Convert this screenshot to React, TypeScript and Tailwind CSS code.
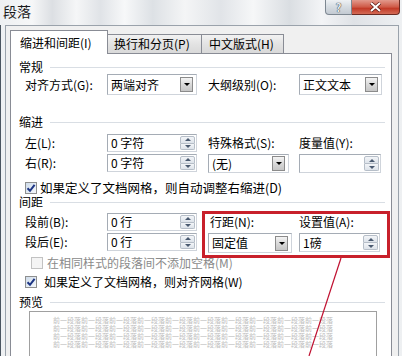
import React from 'react';

const Tri = ({ up = false, color = 'border-t-black' }: { up?: boolean; color?: string }) =>
  up ? (
    <div className="w-0 h-0 border-l-[3px] border-r-[3px] border-b-[3px] border-l-transparent border-r-transparent border-b-[#4a5a70]" />
  ) : (
    <div className={`w-0 h-0 border-l-[3px] border-r-[3px] border-t-[3px] border-l-transparent border-r-transparent ${color}`} />
  );

function DropBtn() {
  return (
    <div className="w-[13px] h-[15px] border border-[#8b8b8b] bg-[linear-gradient(#f4f4f4,#d9d9d9_50%,#c6c6c6)] flex items-center justify-center">
      <Tri />
    </div>
  );
}

function Select({ text, className }: { text: string; className: string }) {
  return (
    <div className={`flex items-center justify-between bg-white border border-[#a5acb5] border-r-[#cfd4db] border-b-[#cfd4db] pl-[3px] pr-[3px] ${className}`}>
      <span className="text-[12px] leading-none text-black">{text}</span>
      <DropBtn />
    </div>
  );
}

function Spin({ text, className }: { text: string; className: string }) {
  return (
    <div className={`flex items-stretch justify-between bg-white border border-[#a5acb5] border-r-[#cfd4db] border-b-[#cfd4db] pl-[3px] ${className}`}>
      <span className="self-center text-[12px] leading-none text-black">{text}</span>
      <div className="flex flex-col w-[15px] my-px mr-px">
        <div className="flex-1 flex items-center justify-center bg-[linear-gradient(#f3f5f8,#dde3ea)] border border-[#b6bec8] rounded-t-[2px]">
          <Tri up />
        </div>
        <div className="flex-1 flex items-center justify-center bg-[linear-gradient(#f3f5f8,#dde3ea)] border border-t-0 border-[#b6bec8] rounded-b-[2px]">
          <Tri color="border-t-[#4a5a70]" />
        </div>
      </div>
    </div>
  );
}

function Check({ checked, disabled }: { checked?: boolean; disabled?: boolean }) {
  return (
    <div
      className={`w-[12px] h-[12px] border flex items-center justify-center ${
        disabled ? 'border-[#c2c2c2] bg-[#f4f4f4]' : 'border-[#8e8f8f] bg-[linear-gradient(135deg,#cfdcea,#f4f7fb)]'
      }`}
    >
      {checked && (
        <svg width="10" height="10" viewBox="0 0 10 10">
          <path d="M1.5 5.2 L4 7.8 L8.6 1.8" fill="none" stroke="#1d3584" strokeWidth="2" />
        </svg>
      )}
    </div>
  );
}

function Heading({ text }: { text: string }) {
  return (
    <div className="flex items-center h-[14px]">
      <span className="text-[12px] leading-none text-black">{text}</span>
      <div className="ml-[7px] flex-1 h-px bg-[#d9dee4]" />
    </div>
  );
}

function Label({ text, className = '' }: { text: string; className?: string }) {
  return <span className={`text-[12px] leading-none text-black whitespace-nowrap ${className}`}>{text}</span>;
}

const previewLine = '前一段落前一段落前一段落前一段落前一段落前一段落前一段落前一段落前一段落前一段落';

export default function App() {
  return (
    <div className="relative w-[402px] h-[356px] overflow-hidden font-['Noto_Sans_CJK_SC','Noto_Sans',sans-serif] bg-[linear-gradient(90deg,#eef0f2_0%,#f6f7f8_8%,#dcdfe3_13%,#f5f6f7_19%,#e0e3e7_25%,#f7f8f9_31%,#dde1e5_38%,#f4f5f6_46%,#e1e4e8_55%,#f6f7f8_63%,#dadee2_72%,#f3f4f6_80%,#dfe2e6_88%,#eef0f2_100%)]">
      {/* Title bar */}
      <div className="h-[25px] flex items-center pl-[3px] pb-[3px]">
        <span className="text-[14px] leading-none text-[#1a1a1a]">段落</span>
      </div>
      <div className="absolute top-0 left-[325px] flex">
        <div className="w-[27px] h-[15px] border border-t-0 border-[#7d8791] rounded-bl-[4px] bg-[linear-gradient(#eef1f4,#d5dbe1_50%,#c3cad2)] flex items-center justify-center">
          <span className="text-[11px] leading-[11px] font-bold text-[#e9edf1] [text-shadow:0_0_1px_#333,0_0_1px_#333]">?</span>
        </div>
        <div className="w-[48px] h-[15px] border border-t-0 border-l-0 border-[#6b2a22] rounded-br-[4px] bg-[linear-gradient(#e29a8d,#cf5a47_50%,#c23b28_60%,#d36a55)] flex items-center justify-center">
          <svg width="13" height="10" viewBox="0 0 13 10">
            <path d="M2 1 L11 9 M11 1 L2 9" stroke="#5a1a14" strokeWidth="3.4" />
            <path d="M2 1 L11 9 M11 1 L2 9" stroke="#ffffff" strokeWidth="2" />
          </svg>
        </div>
      </div>

      {/* Window frame */}
      <div className="h-[331px] border-l border-[#4b5560] pl-[4px] pr-[3px]">
        <div className="h-full border-t border-l border-r border-[#9aa2ab] bg-[#f0f0f0] pl-[4px] pr-[6px]">
          {/* Tabs */}
          <div className="flex items-end h-[27px]">
            <div className="relative z-10 -mb-px w-[98px] h-[24px] bg-white border border-b-0 border-[#898c95] flex items-center pl-[9px] pt-[1px]">
              <Label text="缩进和间距(I)" />
            </div>
            <div className="w-[94px] h-[19px] border border-l-0 border-b-0 border-[#898c95] bg-[linear-gradient(#f2f2f2,#e3e3e3_50%,#d9d9d9)] flex items-center pl-[6px]">
              <Label text="换行和分页(P)" />
            </div>
            <div className="w-[82px] h-[19px] border border-l-0 border-b-0 border-[#898c95] bg-[linear-gradient(#f2f2f2,#e3e3e3_50%,#d9d9d9)] flex items-center pl-[7px]">
              <Label text="中文版式(H)" />
            </div>
          </div>

          {/* Panel */}
          <div className="h-[400px] border border-[#898c95] bg-white pt-[6px] pl-[8px] pr-[6px]">
            <Heading text="常规" />
            <div className="flex items-center h-[21px] pl-[6px]">
              <Label text="对齐方式(G):" className="w-[82px]" />
              <Select text="两端对齐" className="w-[90px] h-[21px]" />
              <Label text="大纲级别(O):" className="ml-[11px] w-[91px]" />
              <Select text="正文文本" className="w-[83px] h-[21px]" />
            </div>

            <div className="mt-[20px]">
              <Heading text="缩进" />
            </div>
            <div className="flex mt-[4px]">
              <div className="flex flex-col pl-[6px]">
                <div className="flex items-center h-[20px]">
                  <Label text="左(L):" className="w-[82px]" />
                  <Spin text="0 字符" className="w-[90px] h-[18px]" />
                </div>
                <div className="flex items-center h-[20px]">
                  <Label text="右(R):" className="w-[82px]" />
                  <Spin text="0 字符" className="w-[90px] h-[18px]" />
                </div>
              </div>
              <div className="ml-[11px] w-[81px] flex flex-col">
                <div className="h-[20px] flex items-center">
                  <Label text="特殊格式(S):" />
                </div>
                <Select text="(无)" className="mt-px w-[81px] h-[19px]" />
              </div>
              <div className="ml-[10px] w-[82px] flex flex-col">
                <div className="h-[20px] flex items-center">
                  <Label text="度量值(Y):" />
                </div>
                <Spin text="" className="mt-px w-[82px] h-[19px]" />
              </div>
            </div>

            <div className="mt-[8px] h-[14px] flex items-center pl-[6px]">
              <Check checked />
              <span className="ml-[3px] text-[12.5px] leading-none text-black whitespace-nowrap">如果定义了文档网格，则自动调整右缩进(D)</span>
            </div>

            <Heading text="间距" />
            <div className="flex mt-[3px]">
              <div className="flex flex-col pl-[6px]">
                <div className="flex items-center h-[20px]">
                  <Label text="段前(B):" className="w-[82px]" />
                  <Spin text="0 行" className="w-[90px] h-[18px]" />
                </div>
                <div className="flex items-center h-[20px]">
                  <Label text="段后(E):" className="w-[82px]" />
                  <Spin text="0 行" className="w-[90px] h-[18px]" />
                </div>
              </div>
              <div className="ml-[11px] w-[84px] flex flex-col">
                <div className="h-[20px] flex items-center pl-[2px]">
                  <Label text="行距(N):" />
                </div>
                <Select text="固定值" className="mt-px w-[84px] h-[20px]" />
              </div>
              <div className="ml-[7px] w-[81px] flex flex-col">
                <div className="h-[20px] flex items-center">
                  <Label text="设置值(A):" />
                </div>
                <Spin text="1磅" className="mt-px w-[81px] h-[19px]" />
              </div>
            </div>

            <div className="mt-[3px] h-[14px] flex items-center pl-[12px]">
              <Check disabled />
              <span className="ml-[4px] text-[12px] leading-none text-[#8a8a8a] whitespace-nowrap">在相同样式的段落间不添加空格(M)</span>
            </div>
            <div className="mt-[5px] h-[14px] flex items-center pl-[6px]">
              <Check checked />
              <span className="ml-[7px] text-[12px] leading-none text-black whitespace-nowrap">如果定义了文档网格，则对齐网格(W)</span>
            </div>

            <div className="mt-[6px]">
              <Heading text="预览" />
            </div>
            <div className="mt-[2px] ml-[10px] w-[348px] h-[60px] border border-[#a0a0a0] bg-white pt-[5px] pl-[23px] flex flex-col gap-px">
              {[0, 1, 2, 3].map((i) => (
                <div key={i} className="w-[282px] h-[7px] text-[7px] leading-[7px] text-[#bdbdbd] whitespace-nowrap">
                  {previewLine}
                </div>
              ))}
            </div>
          </div>
        </div>
      </div>

      {/* Annotation */}
      <div className="absolute left-[202px] top-[211px] w-[188px] h-[47px] border-[3px] border-[#c8202b]" />
      <svg className="absolute left-0 top-0 pointer-events-none" width="402" height="356">
        <line x1="341" y1="258" x2="309" y2="356" stroke="#c01030" strokeWidth="1.2" />
      </svg>
    </div>
  );
}
